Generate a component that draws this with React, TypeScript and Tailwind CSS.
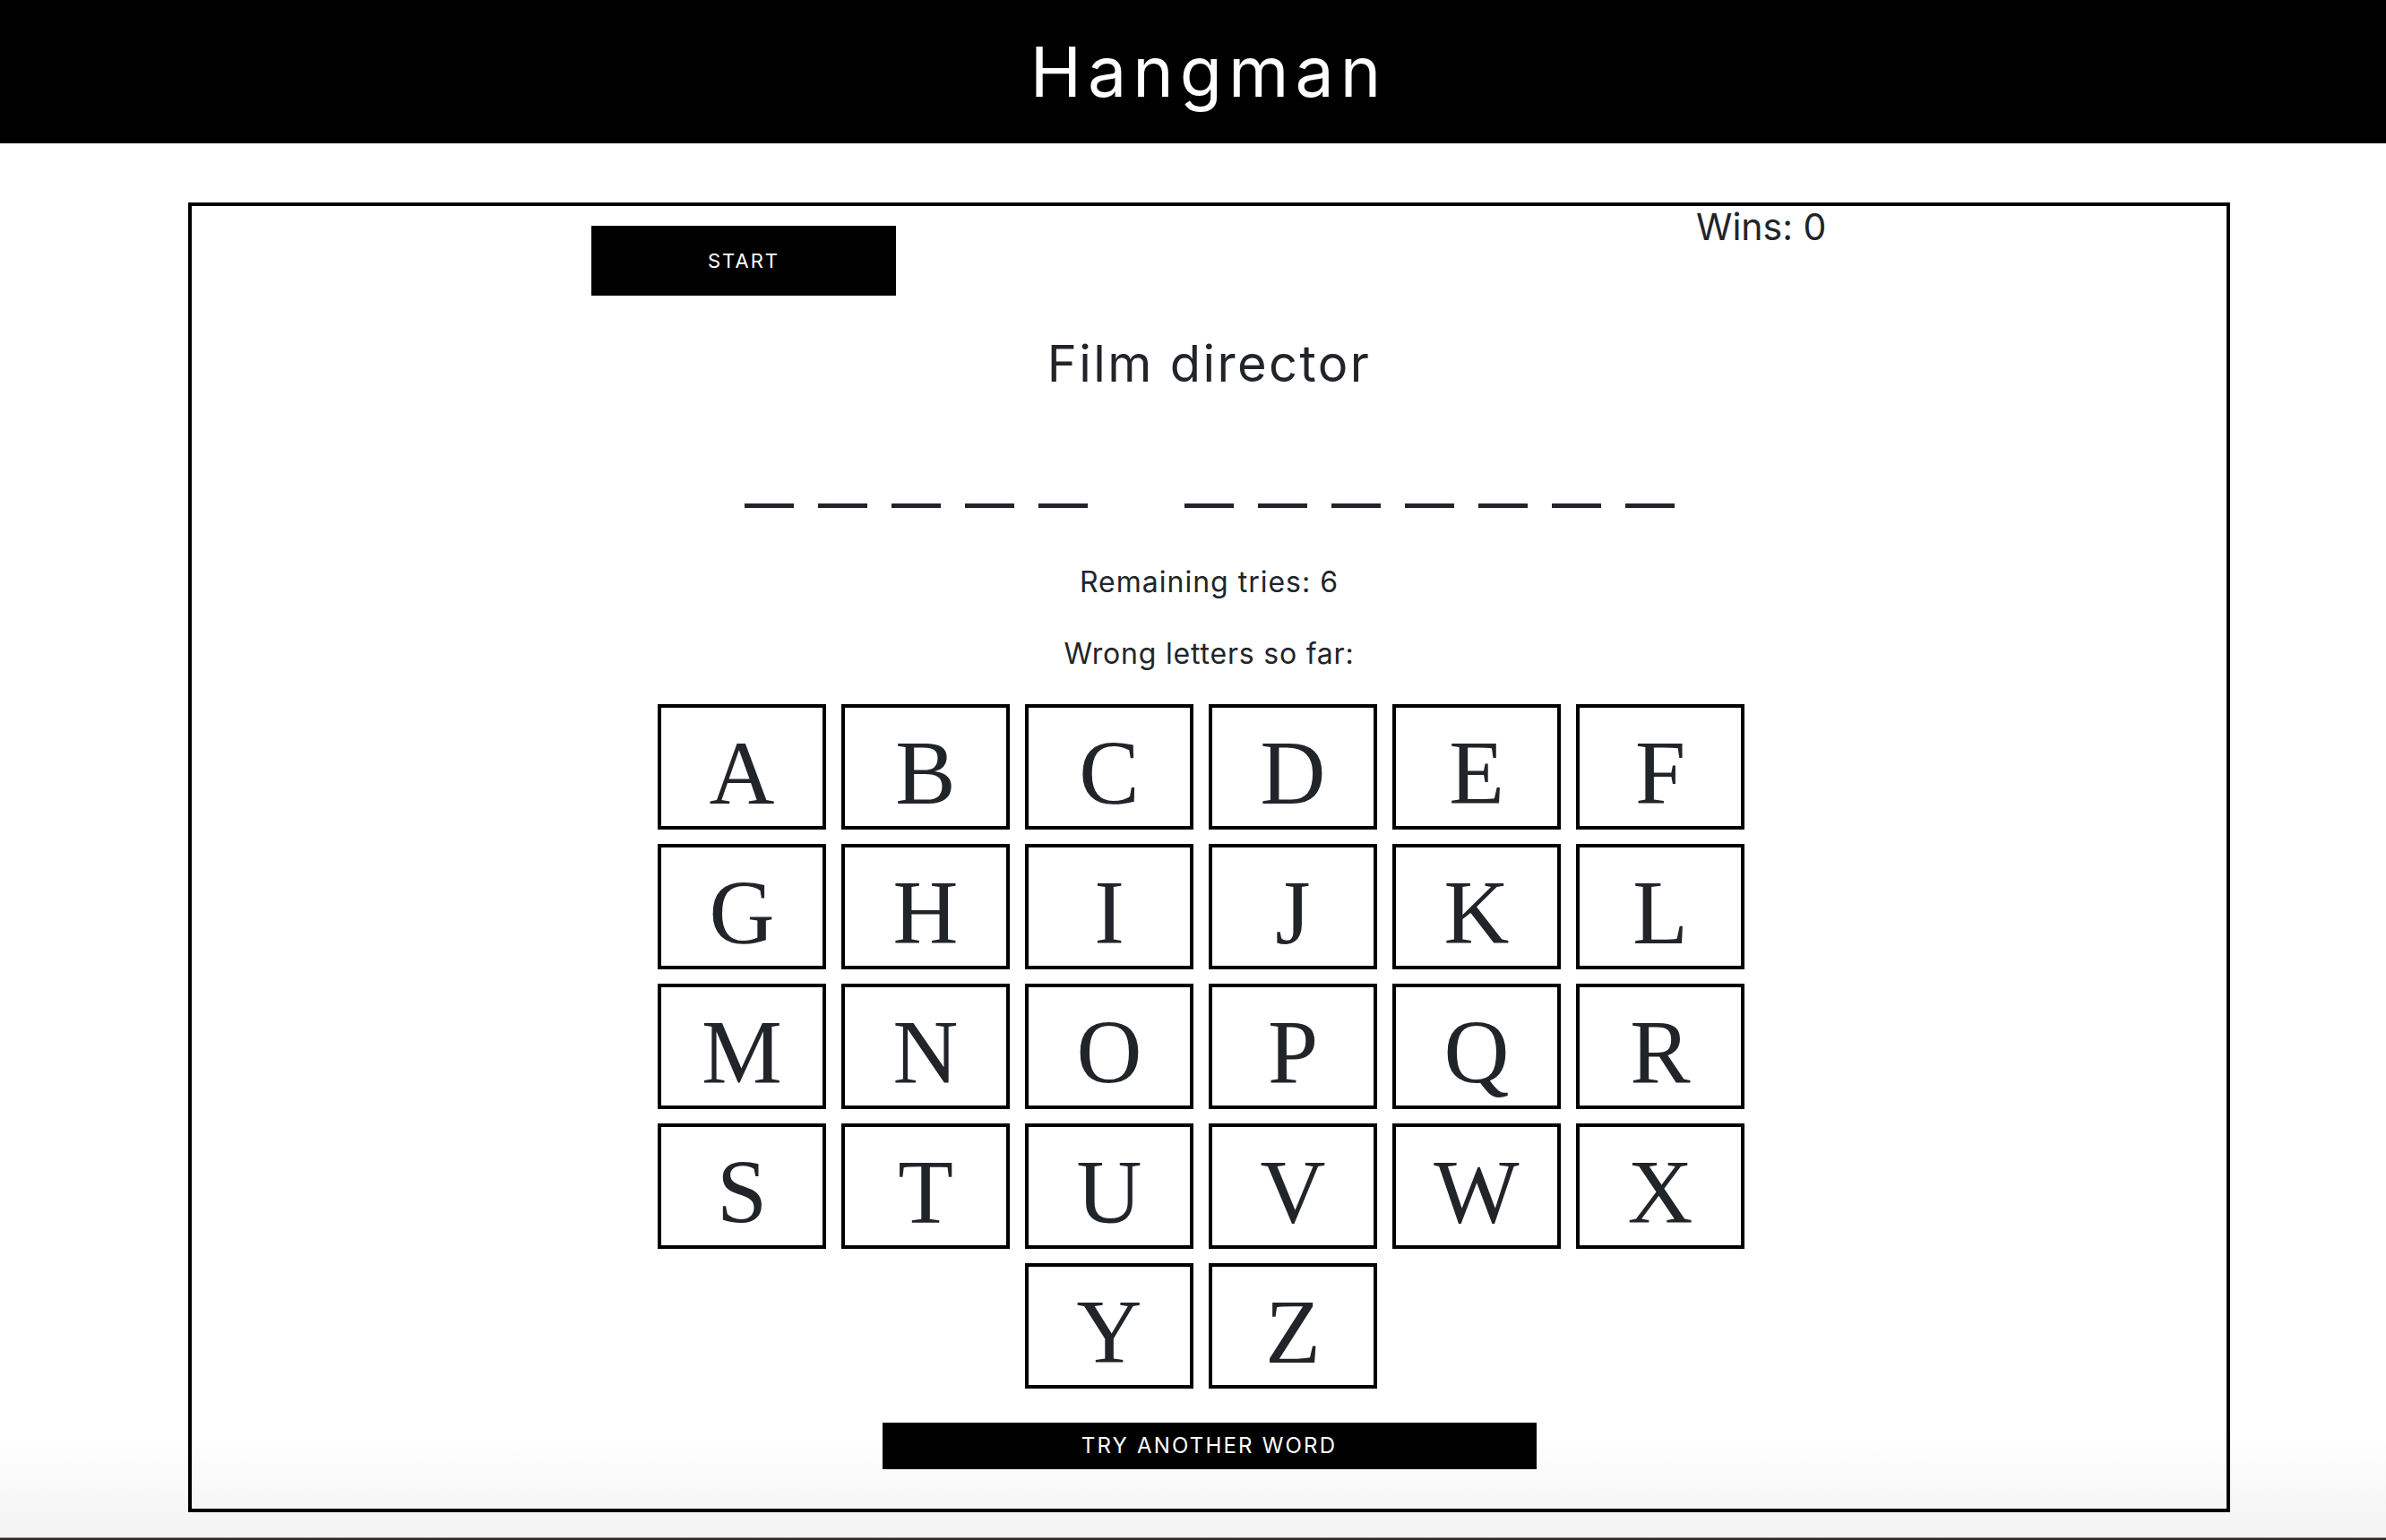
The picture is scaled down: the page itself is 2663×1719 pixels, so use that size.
const LETTERS = "ABCDEFGHIJKLMNOPQRSTUVWXYZ".split("");
const WORDS = [5, 7];

const sans = "font-['Inter','Liberation_Sans',sans-serif]";

function Blanks() {
  return (
    <div className="mt-[128px] flex justify-center gap-[108px]">
      {WORDS.map((len, w) => (
        <div key={w} className="flex gap-[27px]">
          {Array.from({ length: len }).map((_, i) => (
            <span key={i} className="block h-[5px] w-[55px] bg-[#212529]" />
          ))}
        </div>
      ))}
    </div>
  );
}

function LetterTile({ letter }: { letter: string }) {
  return (
    <button
      type="button"
      className="flex h-[140px] w-[188px] items-center justify-center border-4 border-black bg-transparent pt-[14px] font-['Liberation_Serif','Times_New_Roman',serif] text-[101px] leading-none text-[#212529]"
    >
      {letter}
    </button>
  );
}

export default function App() {
  return (
    <div
      className={`h-[1719px] overflow-hidden bg-[linear-gradient(to_bottom,#ffffff_1600px,#f3f3f3_1716px,#2b2622_1717px)] ${sans}`}
    >
      <header className="flex h-[160px] items-center justify-center bg-black pl-[35px]">
        <h1 className="text-[77px] font-normal leading-none tracking-[7px] text-white">
          Hangman
        </h1>
      </header>

      <main className="ml-[210px] mt-[66px] flex w-[2279px] flex-col border-4 border-black pb-[44px] text-[#212529]">
        <div className="flex items-start">
          <button
            type="button"
            className="ml-[446px] mt-[22px] flex h-[78px] w-[340px] items-center justify-center bg-black text-[22px] leading-none tracking-[2px] text-white"
          >
            START
          </button>
          <p className="ml-[893px] mt-[3px] text-[41px] leading-none">Wins: 0</p>
        </div>

        <h3 className="mt-[48px] text-center text-[56px] font-normal leading-none tracking-[2.4px]">
          Film director
        </h3>

        <Blanks />

        <p className="mt-[67px] text-center text-[32px] leading-none tracking-[1px]">
          Remaining tries: 6
        </p>
        <p className="mt-[48px] text-center text-[32px] leading-none tracking-[0.8px]">
          Wrong letters so far:
        </p>

        <div className="ml-[520px] mt-[40px] flex w-[1213px] flex-wrap justify-center gap-x-[17px] gap-y-[16px]">
          {LETTERS.map((l) => (
            <LetterTile key={l} letter={l} />
          ))}
        </div>

        <button
          type="button"
          className="mx-auto mt-[38px] flex h-[52px] w-[730px] items-center justify-center bg-black text-[24px] leading-none tracking-[2.2px] text-white"
        >
          TRY ANOTHER WORD
        </button>
      </main>
    </div>
  );
}
